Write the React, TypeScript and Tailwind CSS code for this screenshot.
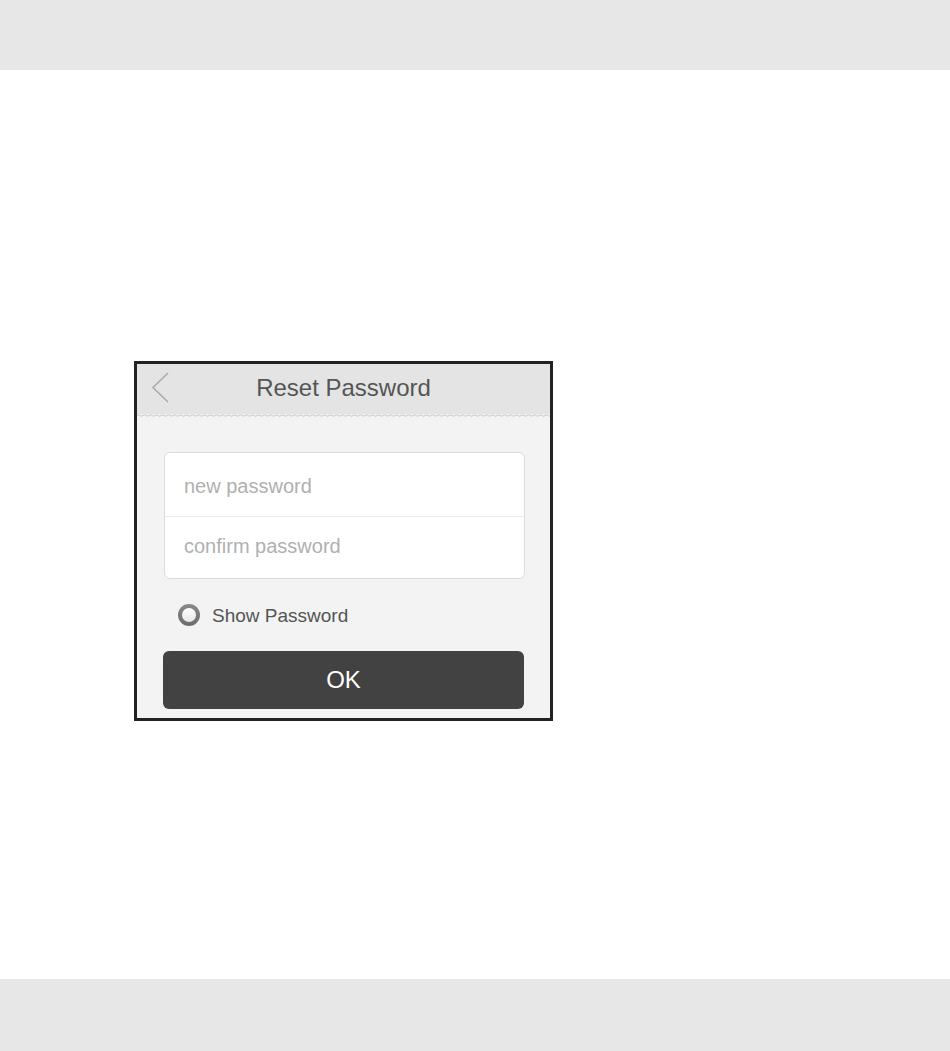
import React from 'react';

const font = { fontFamily: '"Liberation Sans", Arial, sans-serif' };

const WaveLine = () => (
  <svg className="block w-full h-[3px]" preserveAspectRatio="none">
    <defs>
      <pattern id="wave" width="6" height="3" patternUnits="userSpaceOnUse">
        <path d="M0 1.5 Q1.5 0 3 1.5 T6 1.5" fill="none" stroke="#c4c4c4" strokeWidth="1" />
      </pattern>
    </defs>
    <rect width="100%" height="3" fill="url(#wave)" />
  </svg>
);

const ResetPassword = () => {
  return (
    <div className="w-[419px] h-[360px] border-[3px] border-[#222222] bg-[#f3f3f3] flex flex-col overflow-hidden" style={font}>
      {/* Header */}
      <div className="bg-[#e4e4e4]">
        <div className="relative h-[50px] flex items-center justify-center">
          <svg className="absolute left-[14px] top-[8px]" width="18" height="31" viewBox="0 0 18 31">
            <polyline points="17,1 2,15.5 17,30" fill="none" stroke="#a8a8a8" strokeWidth="1.5" />
          </svg>
          <h1 className="text-[24px] text-[#555555] leading-none pb-[3px]">Reset Password</h1>
        </div>
      </div>
      <WaveLine />

      {/* Body */}
      <div className="flex flex-col px-[26px] pt-[35px] pb-[9px]">
        <div className="ml-[1px] mr-[-1px] bg-white border border-[#dcdcdc] rounded-md flex flex-col">
          <input
            type="password"
            placeholder="new password"
            className="h-[64px] pt-[3px] px-[19px] text-[20px] bg-transparent outline-none placeholder:text-[#b0b0b0] border-b border-[#ececec]"
            style={font}
          />
          <input
            type="password"
            placeholder="confirm password"
            className="h-[61px] pb-[3px] px-[19px] text-[20px] bg-transparent outline-none placeholder:text-[#b0b0b0]"
            style={font}
          />
        </div>

        <label className="mt-[25px] ml-[15px] flex items-center gap-[12px] h-[22px]">
          <span className="w-[22px] h-[22px] rounded-full bg-gradient-to-b from-[#8a8a8a] to-[#6a6a6a] flex items-center justify-center">
            <span className="w-[14px] h-[14px] rounded-full bg-gradient-to-b from-[#ffffff] to-[#e6e6e6]" />
          </span>
          <span className="text-[19px] text-[#555555] leading-none">Show Password</span>
        </label>

        <button className="mt-[25px] h-[58px] shrink-0 rounded-md bg-[#424242] text-white text-[24px] flex items-center justify-center" style={font}>
          OK
        </button>
      </div>
    </div>
  );
};

export default function App() {
  return (
    <div className="h-[1051px] w-[950px] flex flex-col bg-white">
      <div className="h-[70px] bg-[#e7e7e7]" />
      <main className="flex-1 pt-[291px] pl-[134px]">
        <ResetPassword />
      </main>
      <div className="h-[72px] bg-[#e7e7e7]" />
    </div>
  );
}
